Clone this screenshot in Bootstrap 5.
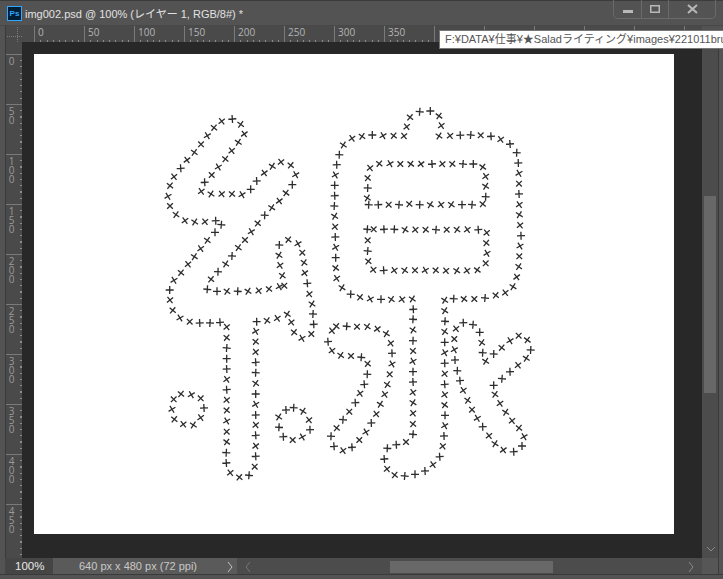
<!DOCTYPE html>
<html lang="ja">
<head>
    <meta charset="UTF-8">
    <meta name="viewport" content="width=device-width, initial-scale=1.0">
    <title>img002.psd</title>
    <link href="https://cdn.jsdelivr.net/npm/bootstrap@5.3.0/dist/css/bootstrap.min.css" rel="stylesheet">
    <style>
        html, body { height: 100%; overflow: hidden; }
        body { background: #535353; font-family: "Liberation Sans", "Noto Sans CJK JP", sans-serif; color: #ddd; }
        .ps-window { height: 579px; border-top: 1px solid #3c3c3c; position: relative; }

        .ps-titlebar { height: 25px; padding-left: 7px; flex: none; border-bottom: 1px solid #484848; }
        .ps-icon { width: 15px; height: 15px; background: #001e36; border: 1px solid #31a8ff; color: #31a8ff; font: bold 8px/13px "Liberation Sans", sans-serif; text-align: center; margin-right: 3px; margin-top: 1px; }
        .ps-doc { font-size: 11px; line-height: 18px; color: #e2e2e2; }
        .ps-controls { width: 103px; height: 19px; margin: -1px 7px 0 0; border: 1px solid #6a6a6a; border-top: 0; border-radius: 0 0 5px 5px; }
        .ps-controls > div { height: 100%; border-right: 1px solid #6a6a6a; }
        .ps-controls > div:nth-child(1) { width: 28px; }
        .ps-controls > div:nth-child(2) { width: 27px; }
        .ps-controls > div:last-child { border-right: 0; flex-grow: 1; }

        .ps-hruler-row { height: 16px; padding-left: 5px; flex: none; }
        .ps-corner { width: 17px; border-left: 1px solid #3a3a3a; background:
            repeating-linear-gradient(90deg, #7a7a7a 0 1px, transparent 1px 2px) 1px 10px / 100% 1px no-repeat,
            repeating-linear-gradient(180deg, #7a7a7a 0 1px, transparent 1px 2px) 11px 1px / 1px 100% no-repeat,
            #4a4a4a; }
        .ps-hruler { width: 680px; padding-left: 12px; overflow: hidden; background: #4a4a4a repeating-linear-gradient(90deg, #8c8c8c 0 1px, transparent 1px 6.25px) 12px 14px / 100% 2px no-repeat; }
        .ps-hruler span { width: 50px; flex: none; border-left: 1px solid #7a7a7a; padding-left: 3px; font: 10px/13px "Open Sans", sans-serif; color: #b4b4b4; }

        .ps-middle { height: 516px; padding-left: 5px; flex: none; }
        .ps-vruler { width: 17px; padding-top: 12px; overflow: hidden; border-left: 1px solid #3a3a3a; background: #4a4a4a repeating-linear-gradient(180deg, #8c8c8c 0 1px, transparent 1px 6.25px) 14px 12px / 2px 100% no-repeat; }
        .ps-vruler span { height: 50px; flex: none; border-top: 1px solid #7a7a7a; padding: 2px 5px 0 0; width: 100%; font: 10px/9px "Open Sans", sans-serif; color: #9a9a9a; text-align: center; white-space: pre-line; }
        .ps-pasteboard { width: 680px; padding: 12px; background: #282828; }
        .ps-sheet { width: 640px; height: 480px; background: #fff; }
        .ps-sheet svg { display: block; }
        .ps-vscroll { width: 16px; background: #4c4c4c; border-right: 1px solid #3a3a3a; box-sizing: content-box; }
        .ps-vthumb { position: absolute; left: 704px; top: 195px; width: 12px; height: 197px; background: #686868; }
        .ps-chev-down { position: absolute; left: 706px; top: 545px; }

        .ps-status { height: 16px; padding-left: 5px; flex: none; font-size: 11px; line-height: 16px; }
        .ps-zoom { width: 48px; background: #454545; padding-left: 10px; color: #e8e8e8; font-size: 11.5px; }
        .ps-size { width: 184px; background: #5a5a5a; padding-left: 26px; color: #c8c8c8; }
        .ps-hscroll { width: 465px; background: #4c4c4c; }
        .ps-hthumb { position: absolute; left: 390px; top: 560px; width: 163px; height: 12px; background: #686868; }
        .ps-scorner { width: 16px; background: #565656; border-right: 1px solid #3a3a3a; box-sizing: content-box; }
        .ps-bottom { border-top: 1px solid #3a3a3a; height: 5px; }

        .ps-tooltip { position: absolute; left: 439px; top: 29px; width: 284px; height: 19px; padding-left: 5px; background: #fff; border: 1px solid #777; border-right: 0; color: #555; font-size: 11px; line-height: 17px; white-space: nowrap; overflow: hidden; }
    </style>
</head>
<body>
    <div class="ps-window d-flex flex-column">
        <div class="ps-titlebar d-flex justify-content-between">
            <div class="d-flex align-items-start pt-1">
                <div class="ps-icon">Ps</div>
                <div class="ps-doc">img002.psd @ 100% (レイヤー 1, RGB/8#) *</div>
            </div>
            <div class="ps-controls d-flex">
                <div class="d-flex align-items-center justify-content-center">
                    <svg width="10" height="10" viewBox="0 0 10 10"><rect x="0" y="6" width="10" height="3" fill="#b8b8b8"/></svg>
                </div>
                <div class="d-flex align-items-center justify-content-center">
                    <svg width="10" height="8" viewBox="0 0 10 8"><rect x="0.75" y="0.75" width="8.5" height="6.5" fill="none" stroke="#b8b8b8" stroke-width="1.5"/></svg>
                </div>
                <div class="d-flex align-items-center justify-content-center">
                    <svg width="11" height="10" viewBox="0 0 11 10"><path d="M1 1l9 8M10 1l-9 8" stroke="#b8b8b8" stroke-width="2" fill="none"/></svg>
                </div>
            </div>
        </div>

        <div class="ps-hruler-row d-flex">
            <div class="ps-corner"></div>
            <div class="ps-hruler d-flex" id="hruler"></div>
        </div>

        <div class="ps-middle d-flex">
            <div class="ps-vruler d-flex flex-column" id="vruler"></div>
            <div class="ps-pasteboard">
                <div class="ps-sheet">
                    <svg id="stitches" width="640" height="480" viewBox="34 54 640 480"></svg>
                </div>
            </div>
            <div class="ps-vscroll"></div>
        </div>

        <div class="ps-status d-flex">
            <div class="ps-zoom">100%</div>
            <div class="ps-size d-flex justify-content-between">
                <span>640 px x 480 px (72 ppi)</span>
                <svg class="me-1 mt-1" width="6" height="10" viewBox="0 0 6 10"><path d="M1 0l4 5-4 5" stroke="#c0c0c0" fill="none"/></svg>
            </div>
            <div class="ps-hscroll d-flex justify-content-between px-2">
                <svg class="mt-1" width="6" height="10" viewBox="0 0 6 10"><path d="M5 0L1 5l4 5" stroke="#777" fill="none"/></svg>
                <svg class="mt-1" width="6" height="10" viewBox="0 0 6 10"><path d="M1 0l4 5-4 5" stroke="#8a8a8a" fill="none"/></svg>
            </div>
            <div class="ps-scorner"></div>
        </div>
        <div class="ps-bottom"></div>

        <div class="ps-vthumb"></div>
        <svg class="ps-chev-down" width="10" height="6" viewBox="0 0 10 6"><path d="M1 1l4 4 4-4" stroke="#8a8a8a" fill="none"/></svg>
        <div class="ps-hthumb"></div>
        <div class="ps-tooltip">F:¥DATA¥仕事¥★Saladライティング¥images¥221011brus</div>
    </div>

    <script>
        // ruler labels; from 400 on the numbers sit under the tooltip
        const hruler = document.getElementById("hruler");
        for (let n = 0; n <= 650; n += 50) {
            const s = document.createElement("span");
            if (n < 400) s.textContent = n;
            hruler.appendChild(s);
        }
        const vruler = document.getElementById("vruler");
        for (let n = 0; n <= 450; n += 50) {
            const s = document.createElement("span");
            s.textContent = String(n).split("").join("\n");
            vruler.appendChild(s);
        }

        // stitch marks, read off the drawing: [origin x, origin y, "x y t ..."] at 3x
        const groups = [
            [150, 100, "247 57 + 215 64 x 192 83 x 172 107 x 153 133 x 133 157 x 111 180 x 92 205 + 72 230 x 60 257 x 54 289 x 60 318 x 78 344 x 105 362 x 134 366 x 165 365 x 197 362 + 214 374 + 195 397 + 172 421 x 152 446 x 133 470 x 114 493 x 93 518 x 72 541 x 59 570 + 272 73 x 283 102 x 265 127 x 245 152 x 226 177 x 205 201 x 185 225 x 164 247 + 154 274 x 183 282 x 215 282 x 246 282 x 276 284 x 302 268 + 320 243 + 343 219 x 367 199 x 393 186 x 422 196 x 437 224 x 427 254 + 408 279 x 388 303 x 365 323 x 344 346 + 323 370 x 304 395 x 285 420 x 265 443 x 246 468 + 227 492 x 204 515 + 183 538 x 172 568 + 201 574 + 231 574 x 263 574 + 294 574 x 326 572 x 357 567 x 388 560 x 403 557 x 397 527 x 390 496 x 387 466 x 388 435 + 415 419 x 444 431 x 457 458 x 462 488 x 464 519 x 472 550 +"],
            [150, 290, "60 30 x 68 61 x 90 84 x 119 95 x 149 99 + 180 99 + 210 97 + 230 111 x 230 143 x 230 174 + 230 206 + 230 237 + 230 268 x 230 299 + 230 330 x 230 361 x 230 393 x 230 425 x 230 456 x 229 488 + 229 519 + 241 548 x 268 562 x 297 556 + 314 530 x 317 499 + 317 468 x 317 436 + 317 405 x 317 375 + 317 343 x 317 312 + 317 280 x 317 248 + 317 217 + 317 186 x 317 155 x 317 124 x 320 95 + 351 92 x 382 85 x 412 73 x 424 97 x 432 127 x 456 145 x 484 132 x 491 103 + 489 72 + 486 42 x 478 12 x"],
            [150, 290, "93 312 x 124 314 x 152 325 x 162 354 + 152 383 x 130 405 x 100 403 x 73 388 x 66 358 x 71 328 x"],
            [150, 290, "408 360 + 431 353 + 459 364 x 477 390 x 480 419 + 457 441 x 428 450 x 400 440 + 387 412 + 386 381 x"],
            [320, 100, "260 80 x 270 52 x 299 35 + 331 33 + 357 48 x 364 77 x 357 108 x 390 107 x 421 106 + 452 105 + 482 106 x 513 109 + 542 118 x 570 132 + 590 158 + 595 189 + 597 220 x 597 251 x 597 282 + 598 314 x 598 344 x 600 376 x 603 407 + 600 438 x 598 469 x 596 500 x 590 531 x 579 560 x 556 578 x 527 586 x 495 594 + 463 597 x 432 597 x 401 596 + 374 601 x"],
            [320, 100, "252 108 x 221 107 x 189 107 x 157 105 + 126 109 x 96 115 x 70 135 x 58 164 + 50 194 + 46 225 x 44 256 + 44 287 + 43 318 + 44 349 x 45 380 x 46 411 + 47 442 x 47 473 + 47 504 x 50 535 x 66 563 x 92 583 + 120 592 x 151 597 x 183 598 + 214 598 x 246 598 x 277 597 x"],
            [320, 100, "150 204 x 178 191 x 210 191 x 241 192 x 272 192 x 303 192 x 336 192 + 367 192 x 397 192 x 429 192 + 460 192 + 488 201 x 497 229 x 497 259 x 497 290 + 488 312 x 456 314 + 426 314 + 394 314 x 363 314 x 331 314 x 299 314 + 268 312 x 237 314 + 206 314 x 175 314 + 146 314 + 142 294 x 143 264 + 143 234 x"],
            [320, 100, "142 388 + 161 388 x 192 388 + 223 388 + 255 389 x 286 389 x 317 389 x 348 389 + 380 389 x 411 389 x 442 389 x 475 389 + 500 398 x 499 429 x 501 460 x 497 490 x 472 510 x 441 512 x 410 512 x 378 512 x 347 511 x 316 511 x 285 511 x 254 511 x 223 511 x 191 511 + 160 509 x 145 484 x 143 453 + 143 421 x"],
            [320, 290, "280 58 + 279 88 + 279 120 x 279 152 + 279 183 x 279 214 x 279 245 + 279 276 + 279 307 x 279 338 x 279 370 x 279 402 x 279 433 + 258 456 x 229 464 + 202 475 + 193 507 + 201 537 x 224 555 x 254 558 + 285 553 + 315 543 + 339 524 x 359 500 + 368 469 x 372 438 + 374 407 x 375 376 + 374 345 x 374 314 x 374 283 + 374 251 x 374 220 + 374 188 x 374 157 + 374 125 x 375 94 + 374 62 x"],
            [320, 290, "36 122 x 49 109 x 80 109 + 111 110 x 142 110 x 172 117 x 199 131 x 212 160 x 216 190 + 216 222 x 209 253 x 202 284 x 194 313 x 181 343 x 169 372 x 154 399 + 138 426 x 118 450 x 96 472 + 69 482 x 42 469 + 33 439 + 50 414 x 69 389 + 88 365 x 106 338 + 120 310 x 133 283 + 142 253 + 143 221 x 124 202 + 93 198 x 62 196 x 36 182 x 24 155 +"],
            [320, 290, "408 116 x 430 98 + 459 104 + 479 127 + 485 158 x 488 188 + 497 214 x 521 192 + 545 173 x 570 152 x 596 137 x 622 150 x 632 180 + 619 205 x 594 226 x 570 245 + 546 266 + 521 286 + 525 313 x 540 340 x 557 367 x 576 392 x 597 414 x 612 440 x 606 468 + 581 485 + 550 480 x 525 461 x 507 437 x 488 410 + 472 385 x 456 359 x 443 331 x 430 301 x 420 272 + 412 242 + 405 210 + 403 179 x 403 147 x"]
        ];

        let marks = "";
        let i = 0;
        groups.forEach(([ox, oy, list]) => {
            const t = list.split(" ");
            for (let k = 0; k < t.length; k += 3) {
                const x = (ox + t[k] / 3).toFixed(1);
                const y = (oy + t[k + 1] / 3).toFixed(1);
                // the brush jitters the angle a little from mark to mark
                const jitter = [-12, 6, -5, 14, 0, -9, 9][i++ % 7];
                const angle = (t[k + 2] === "x" ? 45 : 0) + jitter * (t[k + 2] === "x" ? 1 : 0.3);
                marks += `<path d="M-4 0H4M0 -4V4" transform="translate(${x} ${y}) rotate(${angle})"/>`;
            }
        });
        const svg = document.getElementById("stitches");
        svg.setAttribute("stroke", "#2c2c2c");
        svg.setAttribute("stroke-width", "1.3");
        svg.setAttribute("fill", "none");
        svg.innerHTML = marks;
    </script>
    <script src="https://cdn.jsdelivr.net/npm/bootstrap@5.3.0/dist/js/bootstrap.bundle.min.js"></script>
</body>
</html>
